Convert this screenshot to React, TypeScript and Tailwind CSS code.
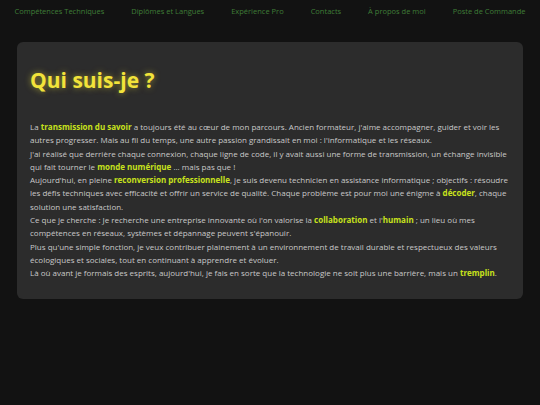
import React from "react";

const H = ({ children }: { children: React.ReactNode }) => (
  <strong className="font-bold text-[#c8e21c]">{children}</strong>
);

const nav = [
  "Compétences Techniques",
  "Diplômes et Langues",
  "Expérience Pro",
  "Contacts",
  "À propos de moi",
  "Poste de Commande",
];

export default function App() {
  return (
    <div
      className="w-[540px] h-[405px] bg-[#121212] overflow-hidden"
      style={{ fontFamily: '"Open Sans", "DejaVu Sans", sans-serif' }}
    >
      <nav className="flex justify-around items-center h-[24px] px-[1px] text-[7.5px] text-[#3f7d37]">
        {nav.map((n) => (
          <span key={n} className="whitespace-nowrap">{n}</span>
        ))}
      </nav>
      <div className="mx-[17px] mt-[18px] h-[257px] rounded-[6px] bg-[#2c2c2c] px-[13px] pt-[24px]">
        <h1
          className="text-[21px] leading-[28px] font-bold text-[#f2e33a]"
          style={{ textShadow: "0 0 6px rgba(242,227,58,0.55)" }}
        >
          Qui suis-je ?
        </h1>
        <div className="mt-[26px] text-[8px] leading-[13.3px] text-[#c9c9c9] whitespace-nowrap">
          <p>
            La <H>transmission du savoir</H> a toujours été au cœur de mon parcours. Ancien formateur, j'aime accompagner, guider et voir les
            <br />
            autres progresser. Mais au fil du temps, une autre passion grandissait en moi : l'informatique et les réseaux.
          </p>
          <p>
            J'ai réalisé que derrière chaque connexion, chaque ligne de code, il y avait aussi une forme de transmission, un échange invisible
            <br />
            qui fait tourner le <H>monde numérique</H> ... mais pas que !
          </p>
          <p>
            Aujourd'hui, en pleine <H>reconversion professionnelle</H>, je suis devenu technicien en assistance informatique ; objectifs : résoudre
            <br />
            les défis techniques avec efficacité et offrir un service de qualité. Chaque problème est pour moi une énigme à <H>décoder</H>, chaque
            <br />
            solution une satisfaction.
          </p>
          <p>
            Ce que je cherche : Je recherche une entreprise innovante où l'on valorise la <H>collaboration</H> et l'<H>humain</H> ; un lieu où mes
            <br />
            compétences en réseaux, systèmes et dépannage peuvent s'épanouir.
          </p>
          <p>
            Plus qu'une simple fonction, je veux contribuer plainement à un environnement de travail durable et respectueux des valeurs
            <br />
            écologiques et sociales, tout en continuant à apprendre et évoluer.
          </p>
          <p>
            Là où avant je formais des esprits, aujourd'hui, je fais en sorte que la technologie ne soit plus une barrière, mais un <H>tremplin</H>.
          </p>
        </div>
      </div>
    </div>
  );
}
